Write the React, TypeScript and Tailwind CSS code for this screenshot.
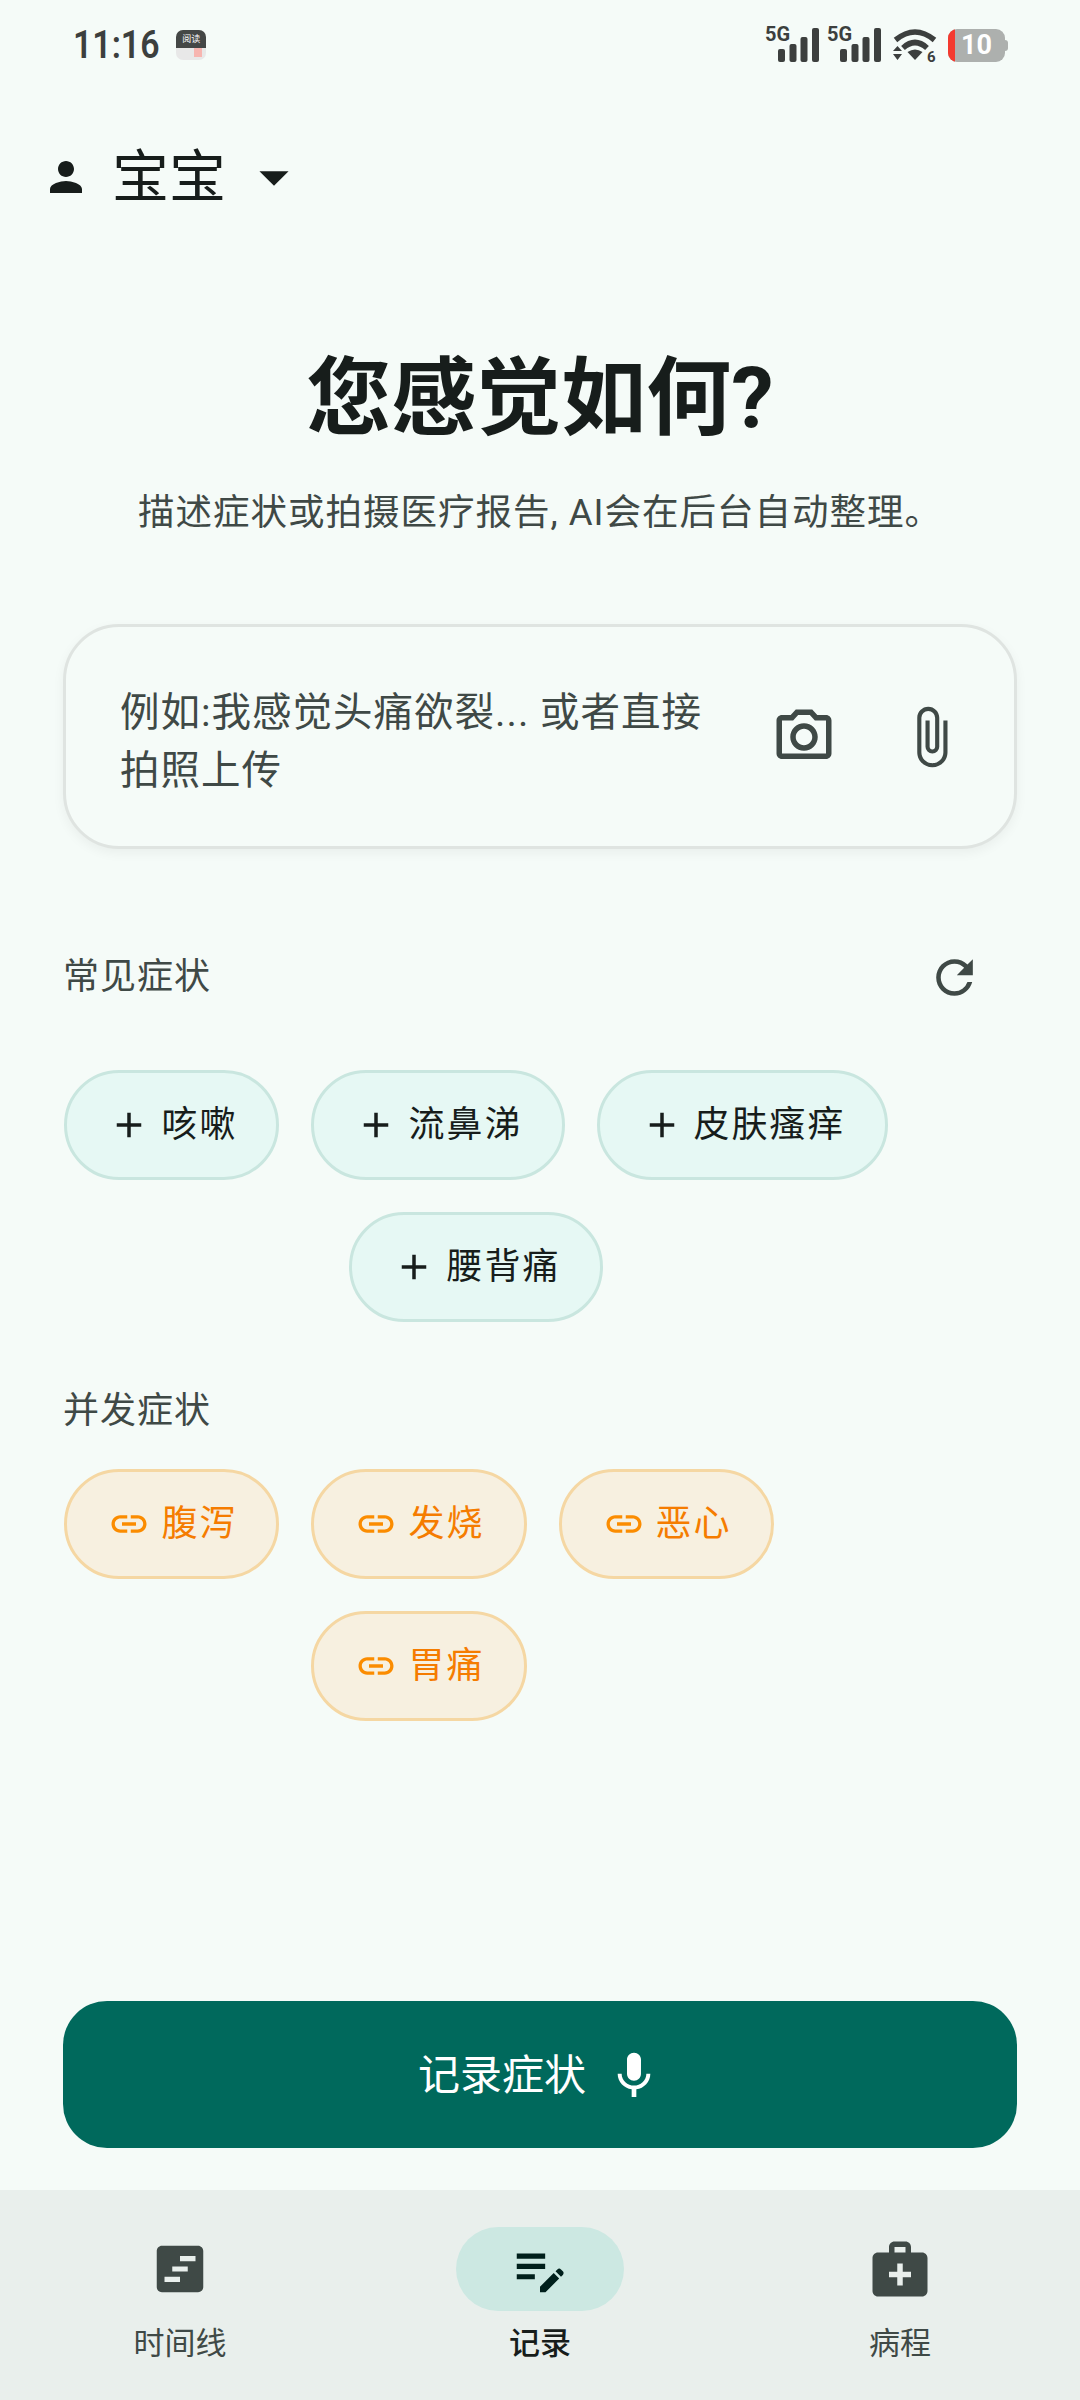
import {
  MdPerson,
  MdArrowDropDown,
  MdOutlinePhotoCamera,
  MdAttachFile,
  MdRefresh,
  MdAdd,
  MdLink,
  MdMic,
  MdEditNote,
  MdMedicalServices,
  MdViewTimeline,
} from 'react-icons/md';

const Signal = () => (
  <svg width="54" height="44" viewBox="0 0 54 44" className="block">
    <text x="0" y="18" fontSize="20" fontWeight="700" fill="#3c3f3e" fontFamily="Roboto, sans-serif">5G</text>
    <rect x="13" y="26" width="7" height="13" rx="2" fill="#3c3f3e" />
    <rect x="24.5" y="21" width="7" height="18" rx="2" fill="#3c3f3e" />
    <rect x="35.5" y="14" width="7" height="25" rx="2" fill="#3c3f3e" />
    <rect x="47" y="5" width="7" height="34" rx="2" fill="#3c3f3e" />
  </svg>
);

const Wifi = () => (
  <svg width="44" height="44" viewBox="0 0 44 44" className="block">
    <path d="M2.5 17 Q22 1 41.5 17" fill="none" stroke="#3c3f3e" strokeWidth="5.5" />
    <path d="M10 25 Q22 14 34 25" fill="none" stroke="#3c3f3e" strokeWidth="5.5" />
    <path d="M14.5 29 Q22 24 29.5 29 L22 37 Z" fill="#3c3f3e" />
    <path d="M0 28 L4.5 23 L9 28 Z M0 31 L9 31 L4.5 37 Z" fill="#3c3f3e" />
    <text x="34" y="38.5" fontSize="15" fontWeight="700" fill="#3c3f3e" fontFamily="Roboto, sans-serif">6</text>
  </svg>
);

const Battery = () => (
  <div className="flex items-center">
    <div className="relative flex h-[33px] w-[57px] items-center justify-center overflow-hidden rounded-[9px] bg-[#adb0ae]">
      <div className="absolute inset-y-0 left-0 w-[7px] bg-[#f43a2f]" />
      <span className="text-[27px] leading-none font-bold text-white">10</span>
    </div>
    <div className="h-[11px] w-[3px] rounded-r-sm bg-[#adb0ae]" />
  </div>
);

const ReaderIcon = () => (
  <div className="flex h-[30px] w-[30px] flex-col overflow-hidden rounded-[7px] bg-[#e8e8e8]">
    <div className="flex h-[18px] items-center justify-center bg-[#444746] text-[9px] leading-none text-white">阅读</div>
    <div className="flex flex-1 justify-end pr-[4px]">
      <div className="h-[9px] w-[8px] bg-[#f7b5b0]" />
    </div>
  </div>
);

const Chip = ({ label }: { label: string }) => (
  <div className="flex h-[110px] items-center gap-[11px] rounded-full border-[3px] border-[#c9e6df] bg-[#e6f8f4] pr-[39px] pl-[41px] text-[36px] tracking-[2px] text-[#171d1b]">
    <MdAdd size={42} />
    <span>{label}</span>
  </div>
);

const LinkChip = ({ label }: { label: string }) => (
  <div className="flex h-[110px] items-center gap-[11px] rounded-full border-[3px] border-[#f5d7a3] bg-[#f7f0e0] pr-[39px] pl-[41px] text-[36px] tracking-[2px] text-[#f57c00]">
    <MdLink size={42} className="text-[#fb8c00]" />
    <span>{label}</span>
  </div>
);

const NavItem = ({ label, active, children }: { label: string; active?: boolean; children: React.ReactNode }) => (
  <div className="flex w-[360px] flex-col items-center">
    <div className={`flex h-[84px] w-[168px] items-center justify-center rounded-[42px] ${active ? 'bg-[#cce8e2] text-[#00201c]' : 'text-[#3f4946]'}`}>
      {children}
    </div>
    <span className={`mt-[15px] text-[31px] leading-[36px] ${active ? 'font-medium text-[#171d1b]' : 'text-[#3f4946]'}`}>{label}</span>
  </div>
);

export default function App() {
  return (
    <div className="flex h-[2400px] w-[1080px] flex-col overflow-hidden bg-[#f5fbf8] font-[Roboto,'Noto_Sans_CJK_SC',sans-serif]">
      <div className="flex h-[90px] items-center justify-between pr-[72px] pl-[73px]">
        <div className="flex items-center">
          <span className="origin-left scale-x-[0.89] text-[38px] leading-none font-semibold text-[#3c3f3e]">11:16</span>
          <div className="ml-[6px]">
            <ReaderIcon />
          </div>
        </div>
        <div className="flex items-center">
          <Signal />
          <div className="ml-[8px]">
            <Signal />
          </div>
          <div className="mr-[11px] ml-[12px]">
            <Wifi />
          </div>
          <Battery />
        </div>
      </div>

      <div className="mt-[52px] flex h-[70px] items-center pl-[42px]">
        <MdPerson size={48} className="text-[#171d1b]" />
        <span className="ml-[22px] text-[57px] leading-none text-[#171d1b]">宝宝</span>
        <MdArrowDropDown size={70} className="ml-[13px] text-[#171d1b]" />
      </div>

      <h1 className="mt-[137px] text-center text-[85px] leading-[100px] font-bold text-[#171d1b]">您感觉如何?</h1>
      <p className="mt-[40px] text-center text-[36.5px] leading-[48px] tracking-[1px] text-[#3f4946]">描述症状或拍摄医疗报告, AI会在后台自动整理。</p>

      <div className="px-[63px]">
        <div className="mt-[87px] flex h-[225px] items-center rounded-[56px] border-[3px] border-[#dfe4e1] bg-[#f5fbf8] pr-[50px] pl-[54px] shadow-[0_4px_12px_rgba(0,0,0,0.05)]">
          <p className="w-[610px] pt-[10px] text-[39.5px] leading-[58px] tracking-[1px] text-[#3f4946]">例如:我感觉头痛欲裂... 或者直接拍照上传</p>
          <div className="ml-auto flex items-center gap-[61px] text-[#3f4946]">
            <MdOutlinePhotoCamera size={66} />
            <MdAttachFile size={66} />
          </div>
        </div>

        <div className="mt-[101px] flex h-[54px] items-center justify-between pr-[35px]">
          <span className="text-[36px] tracking-[1px] text-[#3f4946]">常见症状</span>
          <MdRefresh size={55} className="text-[#3f4946]" />
        </div>

        <div className="mt-[66px] flex w-[826px] flex-wrap justify-center gap-[32px]">
          <Chip label="咳嗽" />
          <Chip label="流鼻涕" />
          <Chip label="皮肤瘙痒" />
          <Chip label="腰背痛" />
        </div>

        <div className="mt-[62px] flex h-[54px] items-center">
          <span className="text-[36px] tracking-[1px] text-[#3f4946]">并发症状</span>
        </div>

        <div className="mt-[31px] flex w-[712px] flex-wrap justify-center gap-[32px]">
          <LinkChip label="腹泻" />
          <LinkChip label="发烧" />
          <LinkChip label="恶心" />
          <LinkChip label="胃痛" />
        </div>
      </div>

      <div className="mt-auto px-[63px]">
        <div className="flex h-[147px] items-center justify-center gap-[20px] rounded-[44px] bg-[#00695c] pt-[2px] text-white">
          <span className="text-[42px]">记录症状</span>
          <MdMic size={56} />
        </div>
      </div>

      <div className="mt-[42px] flex h-[210px] bg-[#e9efec] pt-[37px]">
        <NavItem label="时间线">
          <MdViewTimeline size={62} />
        </NavItem>
        <NavItem label="记录" active>
          <MdEditNote size={62} />
        </NavItem>
        <NavItem label="病程">
          <MdMedicalServices size={66} />
        </NavItem>
      </div>
    </div>
  );
}
